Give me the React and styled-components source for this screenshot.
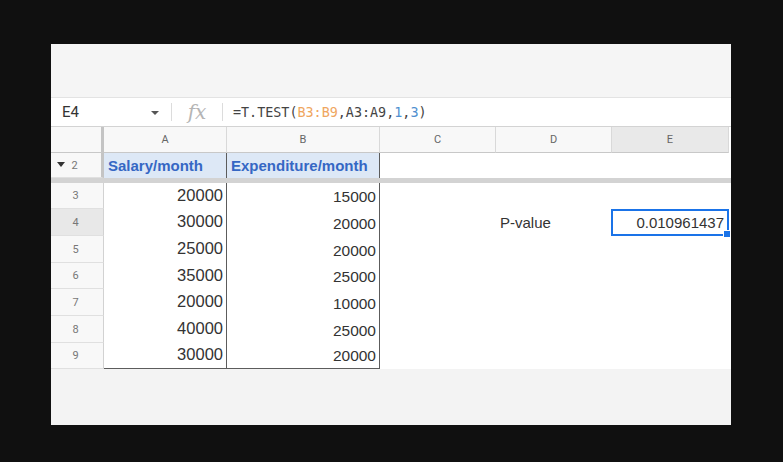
import React from 'react';
import styled, { createGlobalStyle } from 'styled-components';

const Global = createGlobalStyle`
  html, body { margin: 0; padding: 0; background: #101010; }
  #root { width: 783px; height: 462px; }
`;

const Page = styled.div`
  width: 783px;
  height: 462px;
  box-sizing: border-box;
  padding: 44px 0 0 51px;
  background: #101010;
`;

const Sheet = styled.div`
  width: 680px;
  height: 381px;
  background: #f3f3f3;
  display: flex;
  flex-direction: column;
  overflow: hidden;
`;

const Toolbar = styled.div`
  flex: none;
  height: 53px;
  background: #f5f5f5;
  border-bottom: 1px solid #e3e3e3;
`;

const FormulaBar = styled.div`
  flex: none;
  height: 28px;
  background: #fff;
  border-bottom: 1px solid #d3d3d3;
  display: flex;
  align-items: center;
`;

const NameBox = styled.div`
  width: 120px;
  box-sizing: border-box;
  padding: 0 12px 0 11px;
  display: flex;
  align-items: center;
  justify-content: space-between;
  font-family: Roboto, "Liberation Sans", sans-serif;
  font-size: 15px;
  color: #333;
`;

const Caret = styled.span`
  width: 0;
  height: 0;
  border-left: 4px solid transparent;
  border-right: 4px solid transparent;
  border-top: 4px solid #555;
  margin-top: 2px;
`;

const Divider = styled.span`
  width: 1px;
  height: 18px;
  background: #dcdcdc;
`;

const Fx = styled.div`
  width: 50px;
  text-align: center;
  font-family: "DejaVu Serif", "Liberation Serif", serif;
  font-style: italic;
  font-size: 20px;
  color: #b5b5b5;
  line-height: 28px;
`;

const Formula = styled.div`
  padding-left: 10px;
  font-family: "DejaVu Sans Mono", "Liberation Mono", monospace;
  font-size: 13.4px;
  color: #444;
  white-space: pre;
`;

const Tok = styled.span`
  color: ${(p) => p.$c};
`;

const Grid = styled.div`
  display: flex;
  flex-direction: column;
`;

const Row = styled.div`
  display: grid;
  grid-template-columns: 53px 123px 153px 116px 116px 117px 2px;
  height: ${(p) => p.$h}px;
  background: #fff;
`;

const ColHead = styled.div`
  box-sizing: border-box;
  display: flex;
  align-items: center;
  justify-content: center;
  font-family: Roboto, "Liberation Sans", sans-serif;
  font-size: 11px;
  color: #666;
  background: ${(p) => (p.$sel ? '#e9e9e9' : '#f8f8f8')};
  border-right: 1px solid #d9d9d9;
  border-bottom: 1px solid #c8c8c8;
`;

const Corner = styled.div`
  box-sizing: border-box;
  background: #f8f8f8;
  border-right: 3px solid #c4c4c4;
  border-bottom: 1px solid #c8c8c8;
`;

const RowHead = styled.div`
  position: relative;
  box-sizing: border-box;
  display: flex;
  align-items: center;
  justify-content: center;
  padding-right: ${(p) => (p.$frozen ? '3px' : '3px')};
  font-family: Roboto, "Liberation Sans", sans-serif;
  font-size: 11px;
  color: #777;
  background: ${(p) => (p.$sel ? '#e8e8e8' : '#f8f8f8')};
  border-right: ${(p) => (p.$frozen ? '3px solid #c4c4c4' : '1px solid #d2d2d2')};
  border-bottom: 1px solid #e0e0e0;
`;

const FoldArrow = styled.span`
  position: absolute;
  left: 6px;
  top: 9px;
  width: 0;
  height: 0;
  border-left: 4px solid transparent;
  border-right: 4px solid transparent;
  border-top: 5px solid #333;
`;

const HeadCell = styled.div`
  box-sizing: border-box;
  display: flex;
  align-items: center;
  padding-left: 4px;
  font-family: "Liberation Sans", Arial, sans-serif;
  font-weight: bold;
  font-size: 15px;
  color: #3567c4;
  background: #dde8f6;
  border-right: 1px solid #5c5c5c;
`;

const Freeze = styled.div`
  height: 5px;
  background: #d3d3d3;
`;

const NumCell = styled.div`
  box-sizing: border-box;
  display: flex;
  justify-content: flex-end;
  align-items: ${(p) => (p.$low ? 'flex-end' : 'center')};
  padding: 0 ${(p) => (p.$low ? '3px 2px 0' : '3px 2px 0')};
  padding-bottom: ${(p) => (p.$low ? '3px' : '2px')};
  font-family: "Liberation Sans", Arial, sans-serif;
  font-size: ${(p) => (p.$low ? '15.5px' : '16.5px')};
  color: #333;
  background: #fff;
  border-right: 1px solid #5c5c5c;
  border-bottom: ${(p) => (p.$last ? '1px solid #5c5c5c' : 'none')};
`;

const Blank = styled.div`
  background: #fff;
`;

const Label = styled.div`
  display: flex;
  align-items: center;
  padding-left: 4px;
  font-family: "Liberation Sans", Arial, sans-serif;
  font-size: 15px;
  color: #333;
  background: #fff;
`;

const Active = styled.div`
  position: relative;
  display: flex;
  align-items: center;
  justify-content: flex-end;
  padding-right: 5px;
  font-family: "Liberation Sans", Arial, sans-serif;
  font-size: 15px;
  color: #333;
  background: #fff;
  &::after {
    content: '';
    position: absolute;
    left: -1px;
    top: 0;
    right: 0;
    bottom: 0;
    border: 2px solid #1a73e8;
  }
`;

const Handle = styled.span`
  position: absolute;
  right: -2px;
  bottom: -2px;
  width: 6px;
  height: 6px;
  background: #1a73e8;
  border: 1px solid #fff;
  z-index: 1;
`;

const colA = [20000, 30000, 25000, 35000, 20000, 40000, 30000];
const colB = [15000, 20000, 20000, 25000, 10000, 25000, 20000];
const heights = [26, 27, 27, 26, 27, 27, 26];

export default function App() {
  return (
    <>
      <Global />
      <Page>
        <Sheet>
          <Toolbar />
          <FormulaBar>
            <NameBox>
              <span>E4</span>
              <Caret />
            </NameBox>
            <Divider />
            <Fx>fx</Fx>
            <Divider />
            <Formula>
              =T.TEST(<Tok $c="#efa660">B3:B9</Tok>,A3:A9,<Tok $c="#4f8fd0">1</Tok>,<Tok $c="#4f8fd0">3</Tok>)
            </Formula>
          </FormulaBar>
          <Grid>
            <Row $h={26}>
              <Corner />
              <ColHead>A</ColHead>
              <ColHead>B</ColHead>
              <ColHead>C</ColHead>
              <ColHead>D</ColHead>
              <ColHead $sel>E</ColHead>
              <Blank />
            </Row>
            <Row $h={25}>
              <RowHead $frozen>
                <FoldArrow />2
              </RowHead>
              <HeadCell>Salary/month</HeadCell>
              <HeadCell>Expenditure/month</HeadCell>
              <Blank />
              <Blank />
              <Blank />
              <Blank />
            </Row>
            <Freeze />
            {colA.map((a, i) => {
              const r = i + 3;
              const last = i === colA.length - 1;
              return (
                <Row key={r} $h={heights[i]}>
                  <RowHead $sel={r === 4}>{r}</RowHead>
                  <NumCell $last={last}>{a}</NumCell>
                  <NumCell $low $last={last}>{colB[i]}</NumCell>
                  <Blank />
                  {r === 4 ? <Label>P-value</Label> : <Blank />}
                  {r === 4 ? (
                    <Active>
                      0.010961437
                      <Handle />
                    </Active>
                  ) : (
                    <Blank />
                  )}
                  <Blank />
                </Row>
              );
            })}
          </Grid>
        </Sheet>
      </Page>
    </>
  );
}
